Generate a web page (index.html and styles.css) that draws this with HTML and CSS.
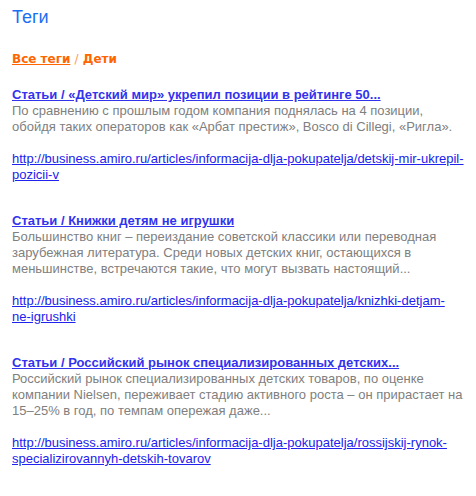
FILE: index.html
```html
<!DOCTYPE html>
<html>
<head>
    <meta charset="UTF-8">
    <title>Теги</title>
    <link rel="stylesheet" href="styles.css">
</head>
<body>
    <div class="page">
        <h1 class="title">Теги</h1>
        <div class="crumbs">
            <a href="#">Все теги</a> <span class="sep">/</span> <b>Дети</b>
        </div>
        <!-- результаты -->
        <div class="results">
            <div class="item">
                <a class="item-title" href="#">Статьи / «Детский мир» укрепил позиции в рейтинге 50...</a>
                <p class="item-text">По сравнению с прошлым годом компания поднялась на 4 позиции, обойдя таких операторов как «Арбат престиж», Bosco di Cillegi, «Ригла».</p>
                <a class="item-url" href="#">http://business.amiro.ru/articles/informacija-dlja-pokupatelja/detskij-mir-ukrepil-pozicii-v</a>
            </div>
            <div class="item">
                <a class="item-title" href="#">Статьи / Книжки детям не игрушки</a>
                <p class="item-text">Большинство книг – переиздание советской классики или переводная зарубежная литература. Среди новых детских книг, остающихся в меньшинстве, встречаются такие, что могут вызвать настоящий...</p>
                <a class="item-url" href="#">http://business.amiro.ru/articles/informacija-dlja-pokupatelja/knizhki-detjam-<span class="nowrap">ne-igrushki</span></a>
            </div>
            <div class="item">
                <a class="item-title" href="#">Статьи / Российский рынок специализированных детских...</a>
                <p class="item-text">Российский рынок специализированных детских товаров, по оценке компании Nielsen, переживает стадию активного роста – он прирастает на 15–25% в год, по темпам опережая даже...</p>
                <a class="item-url" href="#">http://business.amiro.ru/articles/informacija-dlja-pokupatelja/rossijskij-rynok-specializirovannyh-detskih-tovarov</a>
            </div>
        </div>
    </div>
</body>
</html>
```

FILE: styles.css
```css
body {
    margin: 0;
    background-color: #FFF;
    font-family: "Liberation Sans", Arial, sans-serif;
    font-size: 13px;
    line-height: 16px;
}

.page {
    width: 453px;
    padding: 6px 0 0 12px;
}

/* заголовок */
.title {
    margin: 0;
    font-size: 18px;
    font-weight: normal;
    line-height: 22px;
    color: #1A6EF5;
}

/* хлебные крошки */
.crumbs {
    margin-top: 23px;
    font-family: "DejaVu Sans", Verdana, sans-serif;
    font-size: 12px;
    font-weight: bold;
    color: #FF6600;
}
.crumbs a {
    color: #FF6600;
}
.crumbs .sep {
    font-weight: normal;
    color: #FF9A55;
}

/* результаты */
.results {
    margin-top: 20px;
}
.item {
    margin-bottom: 30px;
}
.item-title {
    display: block;
    font-weight: bold;
    color: #3333EE;
}
.item-text {
    margin: 0 0 16px;
    color: #808080;
}
.item-url {
    display: block;
    color: #2222EE;
}
.nowrap {
    white-space: nowrap;
}
```
